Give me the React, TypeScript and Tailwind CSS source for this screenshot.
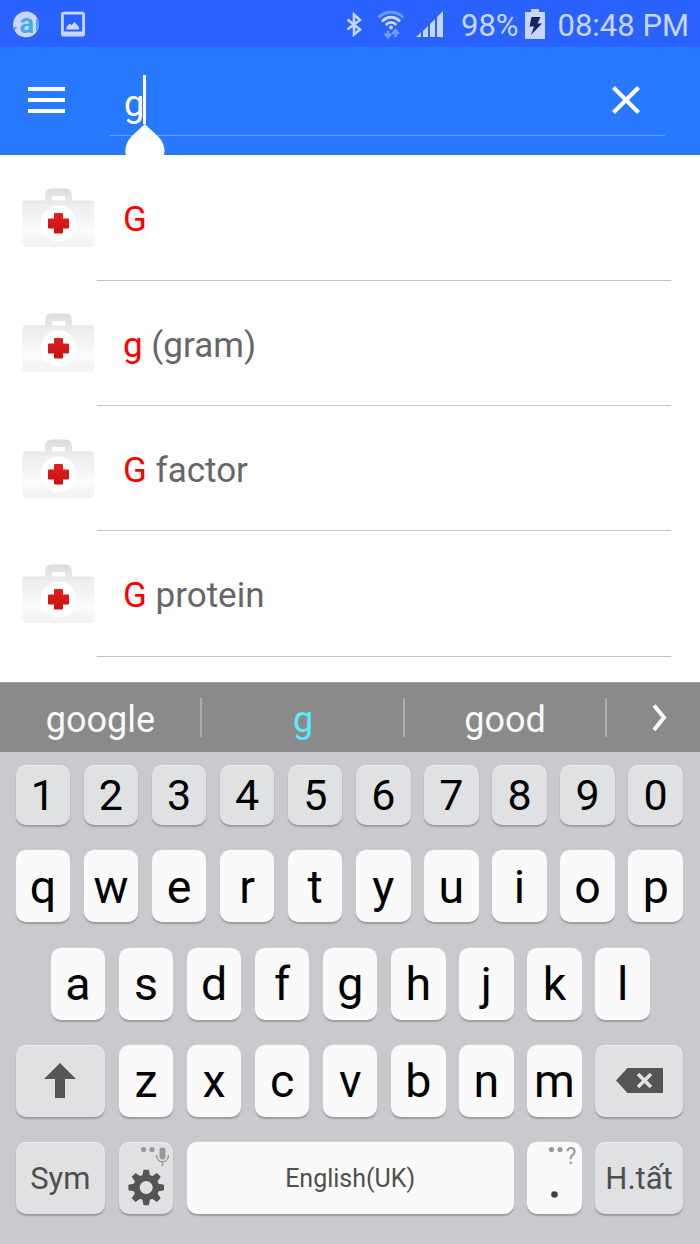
import type { ReactNode } from "react";

interface KeyProps {
    children: ReactNode;
    size?: string;
    tone?: "light" | "grey";
    text?: string;
}

const results = [
    { match: "G", rest: "" },
    { match: "g", rest: " (gram)" },
    { match: "G", rest: " factor" },
    { match: "G", rest: " protein" },
];

function Key({ children, size = "w-[54.5px] h-[72px]", tone = "light", text = "pt-px text-[46.5px] text-black" }: KeyProps) {
    const color = tone === "light"
        ? "bg-[#fafafa] shadow-[0_1.5px_1.5px_#9b9c9f,0_0_0_0.5px_#dcdde0]"
        : "bg-[#e0e1e3] shadow-[0_1.5px_1.5px_#9b9c9f,inset_0_1px_0_#ebecee]";

    return (
        <button className={`relative flex shrink-0 items-center justify-center rounded-[10px] leading-none ${size} ${color} ${text}`}>
            {children}
        </button>
    );
}

function StatusBar() {
    return (
        <div className="flex h-[47px] items-center bg-[#2962ff] text-[#c9d6ff]">
            <svg className="ml-3 shrink-0" width="28" height="30" viewBox="0 0 28 30">
                <circle cx="14.3" cy="16.2" r="13" fill="#274a9e" />
                <circle cx="14" cy="15.5" r="13" fill="#ccd6f5" />
                <text x="7.500" y="23.5" fontSize="27" fontWeight="700" fill="#47a9ea">a</text>
                <path d="M1.300 17.500q2.500 1 3.700 0-.5 4-3.200 3.200zM24 23V10.500l1.600-.5q1.400 3 1.400 5.500-.2 4-3 7.500z" fill="#47a9ea" />
            </svg>
            <svg className="ml-[21px] shrink-0" width="24" height="26" viewBox="0 0 24 26">
                <rect x="1.4" y="2.2" width="21.2" height="22" rx="1.5" fill="none" stroke="currentColor" strokeWidth="2.8" />
                <path d="M1 20.500h22v4H1z" fill="currentColor" />
                <path d="M5.500 18.500v-2.500l3-3.500 2.200 1.800 2.800-3.300 4.500 5v2.500z" fill="currentColor" />
            </svg>
            <svg className="ml-[261px] shrink-0" width="18" height="26" viewBox="0 0 18 26" fill="none" stroke="currentColor" strokeWidth="2.5">
                <path d="M1.500 8.500 14 18.500 8 23.500V3.500l6 5.500L1.500 18.500" />
            </svg>
            <svg className="ml-[13px] shrink-0" width="28" height="30" viewBox="0 0 28 30" fill="none" stroke="currentColor">
                <path d="M1.500 8.500C8 1.500 20 1.500 26.500 8.500" strokeWidth="2.8" opacity=".45" />
                <path d="M5 12.500c5-5.800 13-5.800 18 0" strokeWidth="3" />
                <path d="M8.800 16c3-3.500 7.400-3.500 10.400 0" strokeWidth="2.8" />
                <circle cx="14" cy="18.500" r="2" fill="currentColor" stroke="none" />
                <path d="M11 21.500v6M7.800 24.500l3.200 4 3.200-4M18.500 28v-6M15.300 25l3.200-4 3.200 4" strokeWidth="2.4" opacity=".5" />
            </svg>
            <svg className="ml-[11px] shrink-0" width="28" height="28" viewBox="0 0 28 28" fill="currentColor">
                <path d="M0 27l5-4.500V27zM7 21l5-5v11H7zM14 14l5-5v18h-5zM21 7l6-6v26h-6z" />
            </svg>
            <span className="ml-[17px] w-[64px] text-[31px] leading-[47px] whitespace-nowrap">
                <span className="relative top-[1.5px]">98%</span>
            </span>
            <svg className="shrink-0" width="20" height="30" viewBox="0 0 20 30">
                <path d="M0 3h6V0h8v3h6v27H0z" fill="currentColor" />
                <path d="M6.500 8h9l-3 6.500h4.500L6 26l3-8.500H4.500z" fill="#14255f" />
            </svg>
            <span className="relative top-[1.5px] ml-[12.5px] text-[31px] leading-[47px] whitespace-nowrap">08:48 PM</span>
        </div>
    );
}

function SearchBar() {
    return (
        <header className="relative flex h-[108px] bg-[#2979ff] text-white">
            <button className="mt-[40px] ml-[28px] flex h-[26px] w-[37px] flex-col justify-between">
                <span className="h-1 w-full bg-white" />
                <span className="h-1 w-full bg-white" />
                <span className="h-1 w-full bg-white" />
            </button>
            <div className="ml-11 flex h-[89px] w-[556px] justify-between border-b border-[#699fff]">
                <div className="mt-7 ml-[15px] flex h-[49px]">
                    <span className="w-[19px] text-[36px] leading-[58px]">g</span>
                    <span className="w-[3px] bg-white" />
                </div>
                <svg className="mt-[39px] mr-[25px]" width="28" height="28" viewBox="0 0 28 28" stroke="currentColor" strokeWidth="4">
                    <path d="M1.500 1.500l25 25M26.500 1.500l-25 25" />
                </svg>
            </div>
            {/* text cursor handle */}
            <svg className="absolute top-[77px] left-[125px]" width="40" height="31" viewBox="0 0 40 31" fill="currentColor">
                <path d="M19.700 0l13.500 12.500Q39.500 19 39.500 27l-.5 4H.8L.3 27Q.3 19 6.500 12.500z" />
            </svg>
        </header>
    );
}

function FirstAidIcon() {
    return (
        <svg className="ml-[22px] shrink-0" width="73" height="60" viewBox="0 0 73 60">
            <defs>
                <linearGradient id="kit" x1="0" y1="0" x2="0" y2="1">
                    <stop offset="0" stopColor="#e4e5e6" />
                    <stop offset=".1" stopColor="#eeeeee" />
                    <stop offset=".35" stopColor="#f3f3f3" />
                    <stop offset=".68" stopColor="#fcfcfc" />
                    <stop offset=".82" stopColor="#f5f5f5" />
                    <stop offset="1" stopColor="#f3f3f3" />
                </linearGradient>
                <linearGradient id="handle" x1="0" y1="0" x2="0" y2="1">
                    <stop offset="0" stopColor="#dadcdd" />
                    <stop offset="1" stopColor="#ebecec" />
                </linearGradient>
                <linearGradient id="cross" x1="0" y1="0" x2="0" y2="1">
                    <stop offset="0" stopColor="#e0201f" />
                    <stop offset="1" stopColor="#c81212" />
                </linearGradient>
            </defs>
            <rect x=".3" y="12.500" width="72" height="46.500" rx="4" fill="url(#kit)" />
            <path d="M23 16V7.500Q23 .5 30 .5H43Q50 .5 50 7.500V16z" fill="url(#handle)" />
            <rect x="30" y="8" width="13" height="4.500" fill="#fff" />
            <circle cx="36.500" cy="35.500" r="18" fill="#fff" />
            <path d="M33 25h7q1 0 1 1v4.500h5q1 0 1 1v8q0 1-1 1h-5v4q0 1-1 1h-7q-1 0-1-1v-4h-5q-1 0-1-1v-8q0-1 1-1h5v-4.500q0-1 1-1z" fill="url(#cross)" />
        </svg>
    );
}

function ResultRow({ match, rest }: { match: string; rest: string }) {
    return (
        <li className="relative flex h-[125.3px] items-center">
            <FirstAidIcon />
            <span className="ml-[28px] text-[35px] text-[#666] whitespace-pre">
                <span className="relative top-[2.5px]">
                    <span className="text-[#f00]">{match}</span>
                    {rest}
                </span>
            </span>
            <span className="absolute right-[29px] bottom-0 left-[97px] h-px bg-[#c4c4c4]" />
        </li>
    );
}

function Suggestions() {
    return (
        <div className="flex h-[70px] border-t border-[#a0a0a0] bg-[#8a8a8b] text-[36px] text-[#fafafa]">
            <span className="w-[200px] pl-px text-center leading-[75px]">google</span>
            <span className="mt-[15px] h-[39px] w-[2px] bg-[#adadae]" />
            <span className="w-[201px] pl-px text-center leading-[75px] text-[#5ceaff]">g</span>
            <span className="mt-[15px] h-[39px] w-[2px] bg-[#adadae]" />
            <span className="w-[200px] text-center leading-[75px]">good</span>
            <span className="mt-[15px] h-[39px] w-[2px] bg-[#adadae]" />
            <svg className="mt-[21px] ml-[45px]" width="16" height="28" viewBox="0 0 16 28" fill="none" stroke="currentColor" strokeWidth="4">
                <path d="M2 1.500 12 13.500 2 26" />
            </svg>
        </div>
    );
}

function Keyboard() {
    return (
        <div className="flex h-[492px] flex-col gap-[25.3px] bg-[#c9cace] pt-[13px] pl-[15.6px]">
            <div className="flex gap-[13.6px]">
                {"1234567890".split("").map((k) => (
                    <Key key={k} tone="grey" size="w-[54.5px] h-[60px]" text="text-[43px] text-black">{k}</Key>
                ))}
            </div>
            <div className="flex gap-[13.6px]">
                {"qwertyuiop".split("").map((k) => <Key key={k}>{k}</Key>)}
            </div>
            <div className="flex gap-[13.6px] pl-[35px]">
                {"asdfghjkl".split("").map((k) => <Key key={k}>{k}</Key>)}
            </div>
            <div className="flex gap-[13.6px]">
                <Key tone="grey" size="w-[89.500px] h-[72px]" text="text-[#555]">
                    <svg width="32" height="35" viewBox="0 0 32 35" fill="currentColor">
                        <path d="M16 0l16 16H21v19H11V16H0z" />
                    </svg>
                </Key>
                {"zxcvbnm".split("").map((k) => <Key key={k}>{k}</Key>)}
                <Key tone="grey" size="w-[87.500px] h-[72px]" text="text-[#555]">
                    <svg width="47" height="25" viewBox="0 0 47 25">
                        <path d="M11.500 0H47v25H11.500L0 12.500z" fill="currentColor" />
                        <path d="M22 6l13 13M35 6L22 19" stroke="#e0e1e3" strokeWidth="3.6" />
                    </svg>
                </Key>
            </div>
            <div className="flex gap-[13.6px]">
                <Key tone="grey" size="w-[89.500px] h-[72px]" text="pt-px text-[31px] text-[#4f4f4f]">Sym</Key>
                <Key tone="grey" text="text-[#555]">
                    <svg width="54" height="72" viewBox="0 0 54 72">
                        <g fill="#999">
                            <circle cx="24.500" cy="7.500" r="2.600" />
                            <circle cx="33" cy="7.500" r="2.600" />
                            <rect x="40.500" y="5.500" width="6" height="12" rx="2.500" />
                        </g>
                        <path d="M37.500 13c0 9 12 9 12 0M43.500 19.500V24" fill="none" stroke="#999" strokeWidth="1.500" />
                        <g transform="translate(27.200 45.500)" fill="currentColor">
                            {[0, 45, 90, 135, 180, 225, 270, 315].map((a) => (
                                <path key={a} d="M-4-11L-2.700-17.800H2.700L4-11z" transform={`rotate(${a})`} />
                            ))}
                            <circle r="9.700" fill="none" stroke="currentColor" strokeWidth="6.400" />
                        </g>
                    </svg>
                </Key>
                <Key size="w-[326.800px] h-[72px]" text="pt-px text-[25px] text-[#4f4f4f]">English(UK)</Key>
                <Key text="text-[#444]">
                    <svg width="54" height="72" viewBox="0 0 54 72">
                        <circle cx="24.500" cy="7.500" r="2.600" fill="#999" />
                        <circle cx="33" cy="7.500" r="2.600" fill="#999" />
                        <text x="38.500" y="22" fontSize="23" fill="#999">?</text>
                        <circle cx="27.500" cy="52.500" r="3.300" fill="currentColor" />
                    </svg>
                </Key>
                <Key tone="grey" size="w-[87.500px] h-[72px]" text="pt-px text-[31px] text-[#4f4f4f]">H.tất</Key>
            </div>
        </div>
    );
}

export default function App() {
    return (
        <div className="h-[1244px] w-[700px] overflow-hidden bg-white font-['Roboto',sans-serif]">
            <StatusBar />
            <SearchBar />
            <ul className="h-[527px] overflow-hidden pt-[0.5px]">
                {results.map((r, i) => <ResultRow key={i} match={r.match} rest={r.rest} />)}
            </ul>
            <Suggestions />
            <Keyboard />
        </div>
    );
}
